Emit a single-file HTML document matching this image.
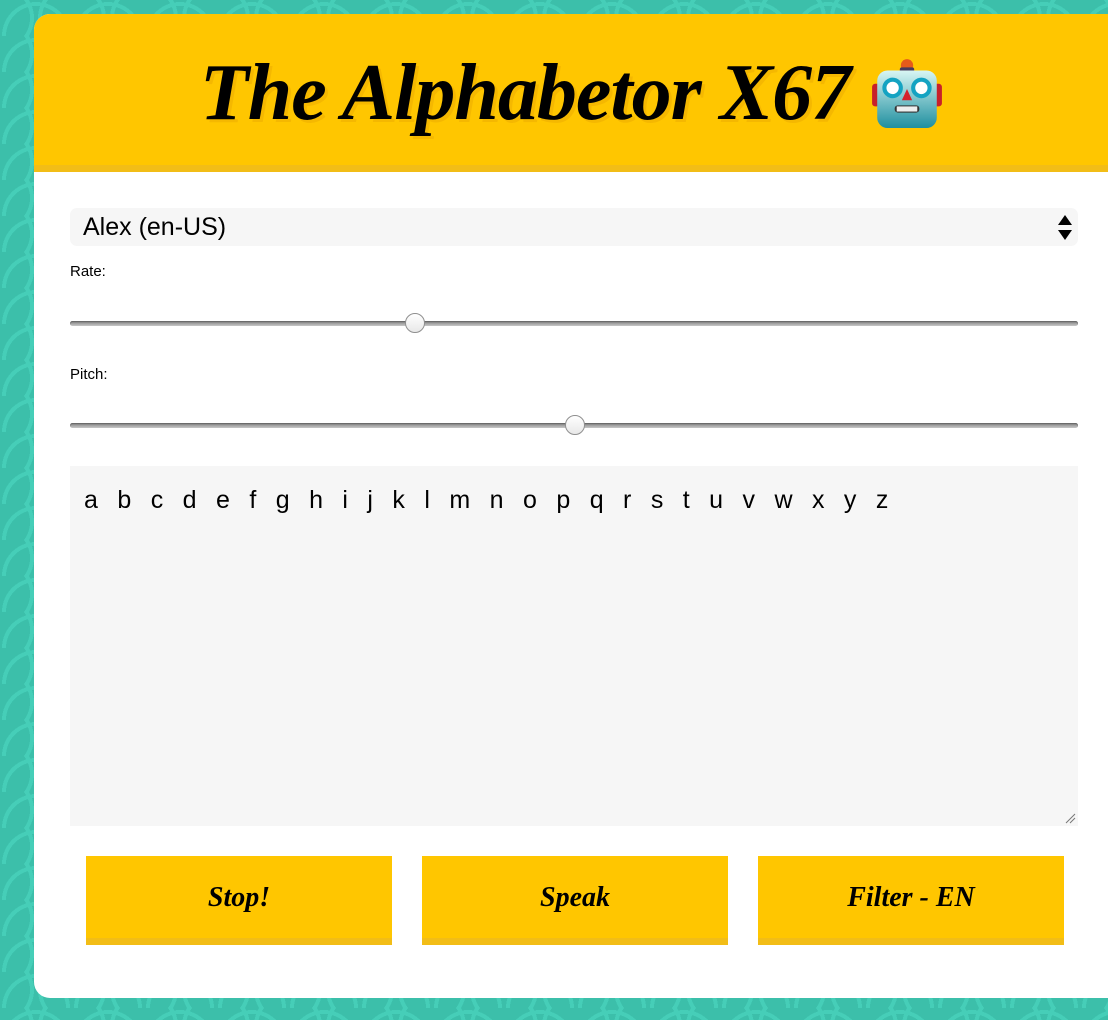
<!DOCTYPE html>
<html><head><meta charset="utf-8">
<style>
html,body{margin:0;padding:0;}
body{width:1108px;height:1020px;overflow:hidden;position:relative;
background-color:#3cbfaa;
background-image:radial-gradient(circle at 50% 100%, transparent 0 30px, #46ceb8 30px 34px, transparent 34px),
radial-gradient(circle at 0% 50%, transparent 0 30px, #46ceb8 30px 34px, transparent 34px),
radial-gradient(circle at 100% 50%, transparent 0 30px, #46ceb8 30px 34px, transparent 34px);
background-size:72px 36px;
font-family:"Liberation Sans",Helvetica,Arial,sans-serif;}
.card{position:absolute;left:34px;top:14px;width:1100px;height:984px;background:#fff;border-radius:16px;overflow:hidden;}
.hdr{height:151px;background:#ffc600;border-bottom:7px solid #f2bd17;position:relative;}
.title{position:absolute;left:0;width:1074px;top:34px;text-align:center;font-family:"Liberation Serif",serif;font-style:italic;font-weight:bold;font-size:80px;line-height:90px;color:#000;text-shadow:3px 3px 0 #f5b800;letter-spacing:-1px;}
.title svg{vertical-align:-10px;margin-left:22px;}
.sel{position:absolute;left:36px;top:194px;width:1008px;height:38px;background:#f6f6f6;border-radius:7px;font-size:25px;line-height:38px;}
.sel span{position:absolute;left:13px;}
.arr{position:absolute;right:6px;top:7px;}
.lbl{position:absolute;left:36px;font-size:15px;color:#000;}
.track{position:absolute;left:36px;width:1008px;height:5px;border-radius:3px;background:linear-gradient(#7d7d7d,#c8c8c8);box-shadow:inset 0 1px 1px #666;}
.thumb{position:absolute;width:20px;height:20px;border-radius:50%;background:linear-gradient(#fff,#e8e8e8);border:1px solid #8f8f8f;box-sizing:border-box;}
.ta{position:absolute;left:36px;top:452px;width:1008px;height:360px;background:#f6f6f6;}
.ta div{position:absolute;left:14px;top:20px;font-size:25px;word-spacing:11.5px;letter-spacing:0.5px;white-space:nowrap;}
.btn{position:absolute;top:842px;width:306px;height:89px;background:#ffc600;box-shadow:inset 0 -7px 0 #f2bd17;text-align:center;line-height:84px;font-family:"Liberation Serif",serif;font-style:italic;font-weight:bold;font-size:28px;}
</style></head><body>
<div class="card">
 <div class="hdr"><div class="title">The Alphabetor X67<svg width="70" height="76" viewBox="0 0 68 74">
  <rect x="0" y="30" width="8" height="22" rx="3" fill="#c8202a"/><rect x="60" y="30" width="8" height="22" rx="3" fill="#c8202a"/>
  <ellipse cx="34" cy="12" rx="6" ry="6" fill="#e65b1a"/><rect x="27" y="14" width="14" height="5" rx="2" fill="#4a3a5a"/>
  <rect x="5" y="17" width="58" height="56" rx="10" fill="url(#g)"/>
  <defs><linearGradient id="g" x1="0" y1="0" x2="0" y2="1"><stop offset="0" stop-color="#d8f6f4"/><stop offset="1" stop-color="#1f8f9f"/></linearGradient></defs>
  <circle cx="20" cy="34" r="8" fill="#fff" stroke="#14a3c2" stroke-width="4"/><circle cx="48" cy="34" r="8" fill="#fff" stroke="#14a3c2" stroke-width="4"/>
  <polygon points="34,35 29,46 39,46" fill="#d4202a"/>
  <rect x="22" y="51" width="24" height="7" rx="3" fill="#333"/><rect x="24" y="52" width="20" height="5" fill="#eee"/>
 </svg></div></div>
 <div class="sel"><span>Alex (en-US)</span><svg class="arr" width="14" height="26" viewBox="0 0 14 26"><polygon points="7,0 14,10 0,10" fill="#000"/><polygon points="0,15 14,15 7,25" fill="#000"/></svg></div>
 <div class="lbl" style="top:249px">Rate:</div>
 <div class="track" style="top:307px"></div><div class="thumb" style="left:371px;top:299px"></div>
 <div class="lbl" style="top:352px">Pitch:</div>
 <div class="track" style="top:409px"></div><div class="thumb" style="left:531px;top:401px"></div>
 <div class="ta"><div>a b c d e f g h i j k l m n o p q r s t u v w x y z</div>
 <svg style="position:absolute;right:2px;bottom:2px" width="12" height="12"><path d="M2 11L11 2M6 11L11 6" stroke="#777" stroke-width="1"/></svg></div>
 <div class="btn" style="left:52px">Stop!</div>
 <div class="btn" style="left:388px">Speak</div>
 <div class="btn" style="left:724px">Filter - EN</div>
</div>
</body></html>
